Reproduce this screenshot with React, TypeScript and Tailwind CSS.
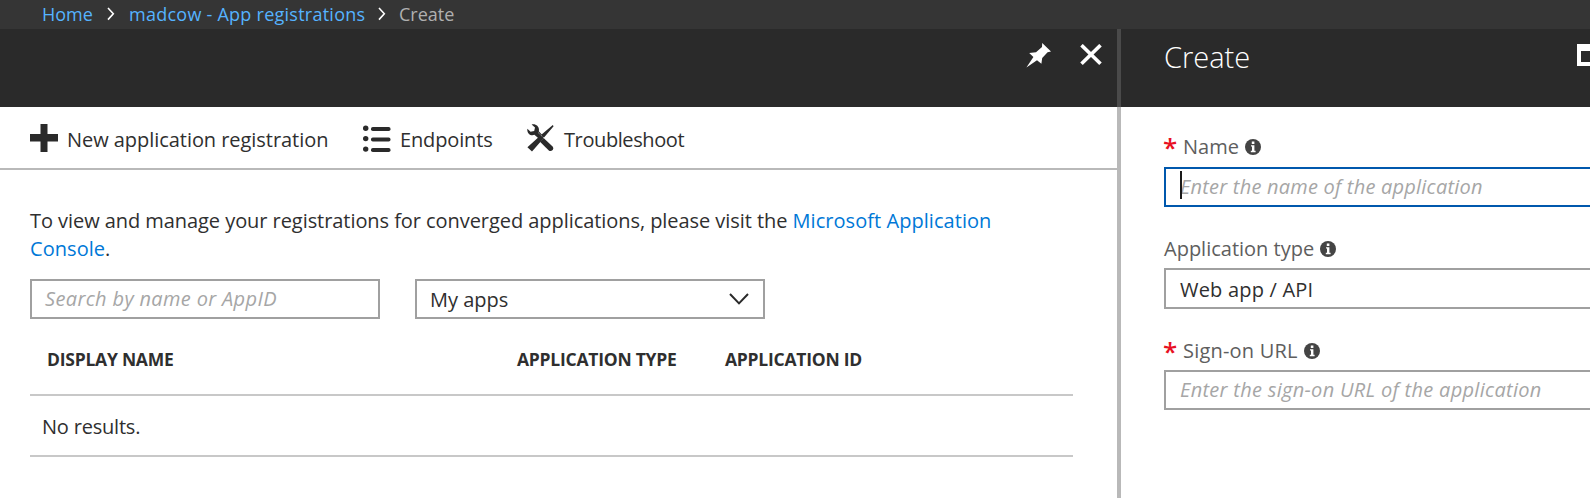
import type { ReactNode } from "react";

function Plus() {
  return (
    <svg width="28" height="28" viewBox="0 0 28 28" className="shrink-0 fill-[#2a2a2a]">
      <path d="M10.5 0h7v10H28v7.5H17.5V28h-7V17.5H0V10h10.5z" />
    </svg>
  );
}

function ListIcon() {
  return (
    <svg width="28" height="28" viewBox="0 0 28 28" className="mt-0.5 shrink-0 fill-[#2a2a2a]">
      <circle cx="2.7" cy="3.2" r="2.7" />
      <circle cx="2.7" cy="13.6" r="2.7" />
      <circle cx="2.7" cy="24.1" r="2.7" />
      <rect x="8" y="2" width="19.5" height="4" rx="1.8" />
      <rect x="8" y="12.5" width="19.5" height="4" rx="1.8" />
      <rect x="8" y="23" width="19.5" height="4" rx="1.8" />
    </svg>
  );
}

function Tools() {
  return (
    <svg width="27" height="28" viewBox="0 0 27 28" className="shrink-0">
      <path d="M4.6 .6C9 -.6 12.8 3 11.8 7.2L15 10.8l-3.6 3.4-4-3.4C3.5 12.4 -.4 9 .4 4.8l3.2 3 3.6-.8.8-3.4z" className="fill-[#2a2a2a]" />
      <path d="M16.6 14l9 8.6c2 2.6-1.4 5.8-3.8 3.8L13 17.8z" className="fill-[#2a2a2a]" />
      <path d="M25.8 1l.8 1.2L16.8 13.8 14.2 17 5 27.6.4 23.2 13.4 11.4z" className="fill-[#2a2a2a]" />
      <path d="M11.4 8.8l6.4 6" className="fill-none stroke-white/70 stroke-1 [stroke-dasharray:1.5_1.5]" />
    </svg>
  );
}

function Pin() {
  return (
    <svg width="26" height="25" viewBox="0 0 26 25" className="shrink-0 fill-white">
      <path d="M16.2 0L25 8.4l-3.4.8-5.4 5.8-.8 5.8-4.4-3.6L.4 24.4l7-10.4-4.2-4 6.8-.8 6-5.2z" />
    </svg>
  );
}

function Close() {
  return (
    <svg width="22" height="22" viewBox="0 0 22 22" className="shrink-0 fill-none stroke-white stroke-[3.6]">
      <path d="M1.5 1.2L20.5 19.8M20.5 1.2L1.5 19.8" />
    </svg>
  );
}

function Info() {
  return (
    <svg width="16" height="16" viewBox="0 0 16 16" className="shrink-0">
      <circle cx="8" cy="8" r="8" className="fill-[#444]" />
      <path d="M6.8 2.6h2.6v2.3H6.8zM6 6.2h3.4v5.6h1.2v1.4H5.8v-1.4H7V7.6H6z" className="fill-white" />
    </svg>
  );
}

function Crumb() {
  return (
    <svg width="8" height="14" viewBox="0 0 8 14" className="shrink-0 fill-none stroke-white stroke-[1.6]">
      <path d="M1 1l5.3 5.8L1 12.6" />
    </svg>
  );
}

function Label({ required, children }: { required?: boolean; children: ReactNode }) {
  return (
    <div className="flex h-7 items-center text-[#5e5e5e]">
      {required && <span className="mr-2 -ml-px w-3 text-[26px] leading-7 font-semibold text-[#e81123]">*</span>}
      <span className="mr-1.5 leading-7">{children}</span>
      <Info />
    </div>
  );
}

export default function App() {
  return (
    <div className="flex h-[498px] w-full flex-col overflow-hidden bg-white font-['Open_Sans','Noto_Sans',sans-serif] text-xl text-[#2f2f2f]">
      <nav className="flex h-[29px] shrink-0 items-center bg-[#353535] pb-0.5 pl-[42px] text-lg leading-7 text-[#55b3ff]">
        <a className="w-[65px]">Home</a>
        <Crumb />
        <a className="ml-3.5 w-[249px] tracking-[0.25px]">madcow - App registrations</a>
        <Crumb />
        <span className="ml-[13px] text-[#b0b0b0]">Create</span>
      </nav>
      <div className="flex grow">
        <section className="flex w-[1117px] shrink-0 flex-col">
          <header className="flex h-[78px] justify-end bg-[#2a2a2a] pt-3.5 pr-[15px]">
            <Pin />
            <div className="ml-[28px] pt-[1px]"><Close /></div>
          </header>
          <div className="flex h-[63px] items-center border-b-2 border-[#b9b9b9] pl-[30px]">
            <Plus />
            <span className="ml-[9px] w-[296px] pt-[5px] whitespace-nowrap tracking-[-0.05px]">New application registration</span>
            <ListIcon />
            <span className="ml-[9px] w-[127px] pt-[5px] tracking-[-0.15px]">Endpoints</span>
            <Tools />
            <span className="ml-[10px] pt-[5px] tracking-[-0.4px]">Troubleshoot</span>
          </div>
          <main className="px-[30px] pt-[37px] pr-[44px]">
            <p className="leading-7 tracking-[-0.06px]">
              To view and manage your registrations for converged applications, please visit the{" "}
              <a className="tracking-[0.05px] text-[#0078d7]">Microsoft Application<br />Console</a>.
            </p>
            <div className="mt-4 flex gap-[35px]">
              <div className="flex h-10 w-[350px] items-center border-2 border-[#a0a0a0] pl-[13px] tracking-[0.35px] text-[#a6a6a6] italic">Search by name or AppID</div>
              <div className="flex h-10 w-[350px] items-center justify-between border-2 border-[#a0a0a0] pr-[14px] pl-[13px]">
                <span className="pt-0.5">My apps</span>
                <svg width="20" height="12" viewBox="0 0 20 12" className="fill-none stroke-[#2a2a2a] stroke-2">
                  <path d="M1 1l9 9.4L19 1" />
                </svg>
              </div>
            </div>
            <div className="flex h-[77px] items-center border-b-2 border-[#c8c8c8] pt-1.5 pl-[17px] text-[17.5px] font-bold tracking-[-0.24px]">
              <span className="w-[470px]">DISPLAY NAME</span>
              <span className="w-[208px]">APPLICATION TYPE</span>
              <span>APPLICATION ID</span>
            </div>
            <div className="flex h-[61px] items-center border-b-2 border-[#c8c8c8] pt-0.5 pl-3 tracking-[-0.2px]">No results.</div>
          </main>
        </section>
        <div className="flex w-1 shrink-0 flex-col bg-[#b9b9b9]">
          <div className="h-[78px] bg-[#4a4a4a]" />
        </div>
        <section className="flex min-w-0 grow flex-col">
          <header className="flex h-[78px] shrink-0 items-start justify-between overflow-hidden bg-[#2a2a2a] pl-[43px] text-white">
            <h1 className="pt-[7px] text-[29px] leading-[42px] font-light">Create</h1>
            <svg width="13" height="22" viewBox="0 0 13 22" className="mt-[15px] fill-none stroke-white">
              <path d="M2 0v22" strokeWidth="4" />
              <path d="M0 3.5h13" strokeWidth="7" />
              <path d="M0 20h13" strokeWidth="4" />
            </svg>
          </header>
          <form className="flex flex-col pt-[26px] pl-[43px]">
            <Label required>Name</Label>
            <div className="relative mt-1.5 flex h-10 items-center border-2 border-r-0 border-[#0058ad] pl-3.5 tracking-[0.22px] text-[#a6a6a6] italic">
              <span className="absolute top-0.5 left-3.5 h-7 w-0.5 bg-[#1a1a1a]" />
              Enter the name of the application
            </div>
            <div className="mt-7"><Label>Application type</Label></div>
            <div className="mt-[5px] flex h-[41px] items-center border-2 border-r-0 border-[#a0a0a0] pt-0.5 pl-3.5 tracking-[0.2px]">Web app / API</div>
            <div className="mt-7"><Label required><span className="tracking-[0.2px]">Sign-on URL</span></Label></div>
            <div className="mt-[5px] flex h-10 items-center border-2 border-r-0 border-[#a0a0a0] pl-3.5 tracking-[0.3px] text-[#a6a6a6] italic">Enter the sign-on URL of the application</div>
          </form>
        </section>
      </div>
    </div>
  );
}
